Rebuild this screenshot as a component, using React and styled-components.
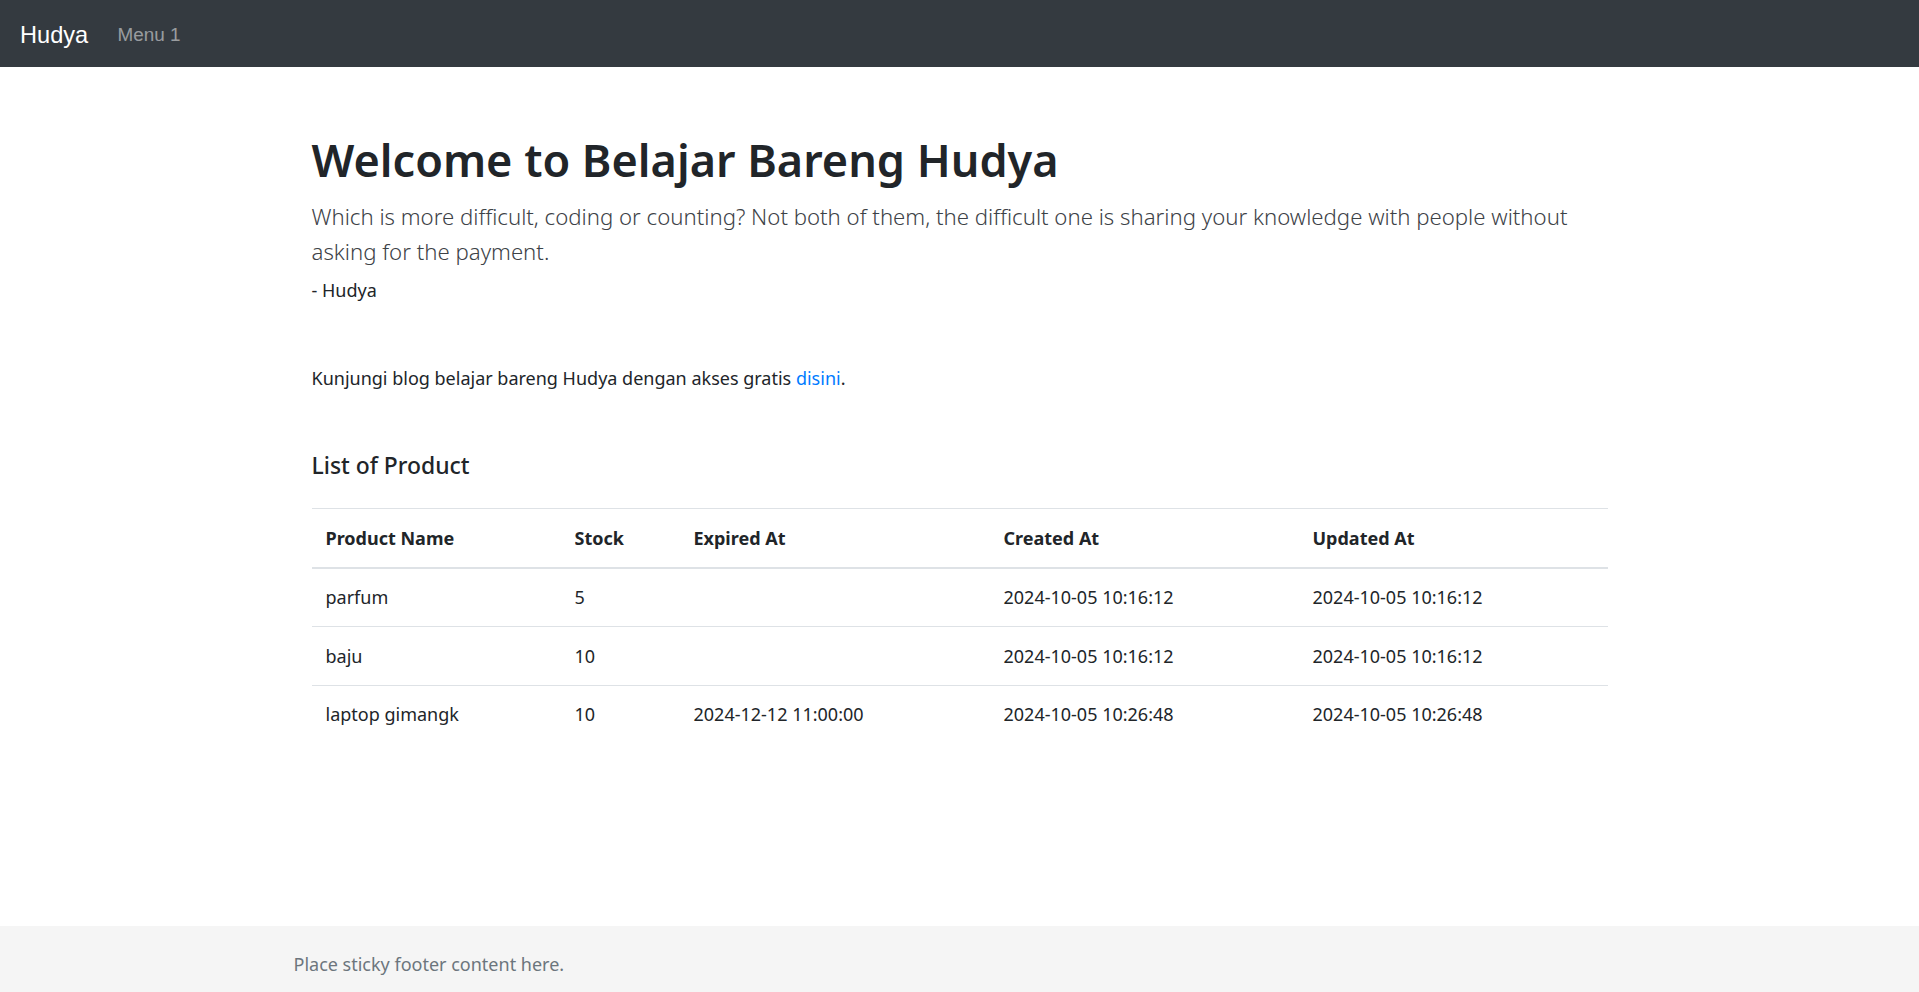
import React from "react"
import styled, { createGlobalStyle } from "styled-components"

const GlobalStyle = createGlobalStyle`
  html, body {
    margin: 0;
    padding: 0;
  }
  body {
    font-family: "Noto Sans", "Open Sans", sans-serif;
    font-size: 18px;
    line-height: 28.3px;
    color: #212529;
    background: #fff;
  }
  * {
    box-sizing: border-box;
  }
`

const Page = styled.div`
  min-height: 100vh;
  display: flex;
  flex-direction: column;
`

const Navbar = styled.nav`
  height: 67px;
  background: #343a40;
  display: flex;
  align-items: center;
  padding: 5px 19px 0 20px;
  font-family: "Liberation Sans", Arial, sans-serif;
`

const Brand = styled.a`
  color: #fff;
  font-size: 23.6px;
  margin-right: 20px;
  text-decoration: none;
  line-height: 1.5;
`

const NavLink = styled.a`
  color: rgba(255, 255, 255, 0.5);
  font-size: 18.9px;
  padding: 0 9.4px;
  text-decoration: none;
  margin-top: -2px;
`

const Main = styled.main`
  width: 1296px;
  margin: 0 auto;
  padding-top: 64px;
  flex: 1;
`

const Title = styled.h1`
  font-size: 45px;
  font-weight: 600;
  line-height: 57.6px;
  margin: 0 0 10px;
`

const Lead = styled.p`
  font-size: 22.2px;
  font-weight: 300;
  line-height: 35px;
  color: #3d4247;
  margin: 0 0 7px;
`

const Author = styled.p`
  margin: 0;
`

const Text = styled.p`
  margin: 60px 0 0;
`

const Link = styled.a`
  color: #007bff;
  text-decoration: none;
`

const SectionTitle = styled.h5`
  font-size: 22.9px;
  font-weight: 500;
  line-height: 28.3px;
  margin: 60px 0 28px;
`

const Table = styled.table`
  width: 100%;
  border-collapse: collapse;
`

const HeadCell = styled.th`
  width: ${props => props.w}px;
  text-align: left;
  font-weight: 700;
  padding: 14.5px 14px;
  border-top: 1px solid #dee2e6;
  border-bottom: 2px solid #dee2e6;
`

const Cell = styled.td`
  padding: 14.6px 14px;
  border-top: 1px solid #dee2e6;
`

const Footer = styled.footer`
  height: 66px;
  background: #f5f5f5;
  flex-shrink: 0;
`

const FooterInner = styled.div`
  width: 1332px;
  margin: 0 auto;
  line-height: 66px;
  padding-top: 5px;
  color: #6c757d;
`

const products = [
  { name: "parfum", stock: 5, expired: "", created: "2024-10-05 10:16:12", updated: "2024-10-05 10:16:12" },
  { name: "baju", stock: 10, expired: "", created: "2024-10-05 10:16:12", updated: "2024-10-05 10:16:12" },
  { name: "laptop gimangk", stock: 10, expired: "2024-12-12 11:00:00", created: "2024-10-05 10:26:48", updated: "2024-10-05 10:26:48" },
]

const App = () => {
  return (
    <Page>
      <GlobalStyle />
      <Navbar>
        <Brand href="#">Hudya</Brand>
        <NavLink href="#">Menu 1</NavLink>
      </Navbar>
      <Main>
        <Title>Welcome to Belajar Bareng Hudya</Title>
        <Lead>
          Which is more difficult, coding or counting? Not both of them, the difficult one is sharing your
          knowledge with people without asking for the payment.
        </Lead>
        <Author>- Hudya</Author>
        <Text>
          Kunjungi blog belajar bareng Hudya dengan akses gratis <Link href="#">disini</Link>.
        </Text>
        <SectionTitle>List of Product</SectionTitle>
        <Table>
          <thead>
            <tr>
              <HeadCell w={249}>Product Name</HeadCell>
              <HeadCell w={119}>Stock</HeadCell>
              <HeadCell w={310}>Expired At</HeadCell>
              <HeadCell w={309}>Created At</HeadCell>
              <HeadCell w={309}>Updated At</HeadCell>
            </tr>
          </thead>
          <tbody>
            {products.map(p => (
              <tr key={p.name}>
                <Cell>{p.name}</Cell>
                <Cell>{p.stock}</Cell>
                <Cell>{p.expired}</Cell>
                <Cell>{p.created}</Cell>
                <Cell>{p.updated}</Cell>
              </tr>
            ))}
          </tbody>
        </Table>
      </Main>
      <Footer>
        <FooterInner>Place sticky footer content here.</FooterInner>
      </Footer>
    </Page>
  )
}

export default App
